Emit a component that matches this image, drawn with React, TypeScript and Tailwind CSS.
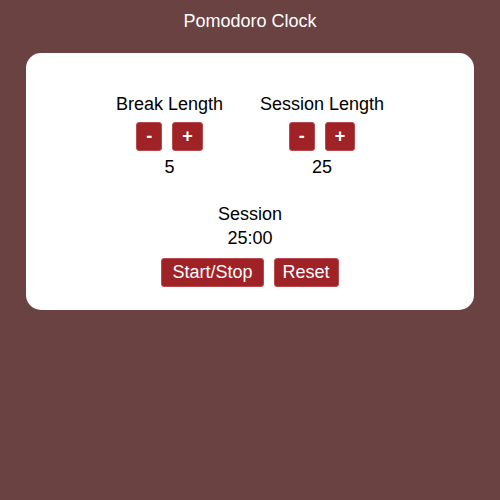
import React, { useState } from 'react';

type StepperProps = {
  label: string,
  value: number,
  onDec: () => void,
  onInc: () => void,
};

const btn = 'bg-[#9f2227] text-white border border-[#b8494d] rounded-[3px] leading-[27px] h-[29px] cursor-pointer';

const Stepper = ({ label, value, onDec, onInc }: StepperProps) => (
  <div className="flex flex-col items-center">
    <div>{label}</div>
    <div className="flex gap-[10px] mt-[6px]">
      <button type="button" className={`${btn} px-[9px] font-bold`} onClick={onDec}>-</button>
      <button type="button" className={`${btn} px-[9px] font-bold`} onClick={onInc}>+</button>
    </div>
    <div className="mt-[4px]">{value}</div>
  </div>
);

const App = () => {
  const [breakLength, setBreakLength] = useState(5);
  const [sessionLength, setSessionLength] = useState(25);

  return (
    <div className="min-h-screen bg-[#6b4242] text-[18px] leading-[24px] font-['Liberation_Sans',Arial,sans-serif] pt-[9px]">
      <h1 className="text-center text-white">Pomodoro Clock</h1>
      <div className="mx-[26px] mt-[20px] bg-white rounded-[15px] pt-[39px] pb-[23px] flex flex-col items-center text-black">
        <div className="flex gap-[37px]">
          <Stepper
            label="Break Length"
            value={breakLength}
            onDec={() => setBreakLength(Math.max(1, breakLength - 1))}
            onInc={() => setBreakLength(Math.min(60, breakLength + 1))}
          />
          <Stepper
            label="Session Length"
            value={sessionLength}
            onDec={() => setSessionLength(Math.max(1, sessionLength - 1))}
            onInc={() => setSessionLength(Math.min(60, sessionLength + 1))}
          />
        </div>
        <div className="mt-[23px]">Session</div>
        <div>{`${String(sessionLength).padStart(2, '0')}:00`}</div>
        <div className="flex gap-[10px] mt-[8px]">
          <button type="button" className={`${btn} px-[10px]`}>Start/Stop</button>
          <button type="button" className={`${btn} px-[8px]`}>Reset</button>
        </div>
      </div>
    </div>
  );
};

export default App;
